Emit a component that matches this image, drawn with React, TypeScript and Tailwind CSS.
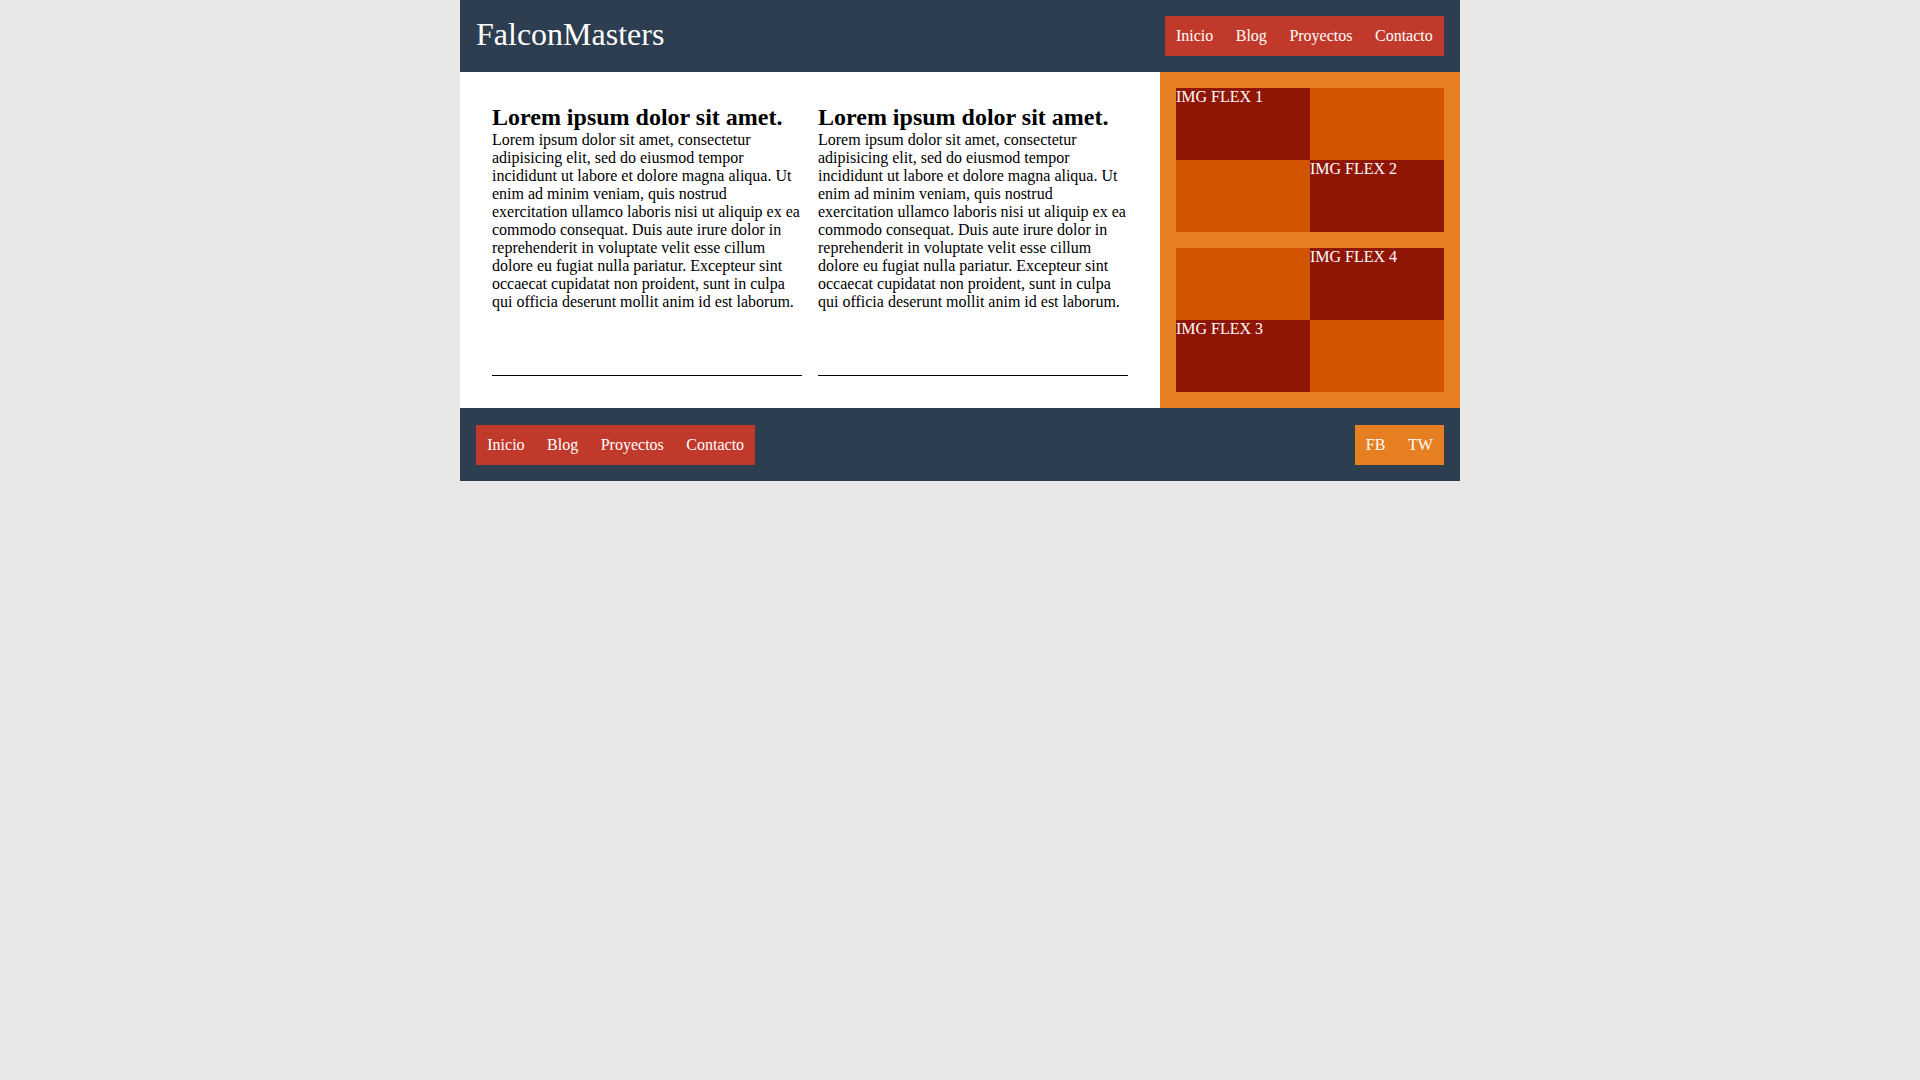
import React from "react";

const links = ["Inicio", "Blog", "Proyectos", "Contacto"];

const lorem =
  "Lorem ipsum dolor sit amet, consectetur adipisicing elit, sed do eiusmod tempor incididunt ut labore et dolore magna aliqua. Ut enim ad minim veniam, quis nostrud exercitation ullamco laboris nisi ut aliquip ex ea commodo consequat. Duis aute irure dolor in reprehenderit in voluptate velit esse cillum dolore eu fugiat nulla pariatur. Excepteur sint occaecat cupidatat non proident, sunt in culpa qui officia deserunt mollit anim id est laborum.";

function Nav({ items, color }: { items: string[]; color: string }) {
  return (
    <nav className={`flex h-10 items-center ${color}`}>
      {items.map((item) => (
        <a key={item} href="#" className="px-[11.25px] text-white">
          {item}
        </a>
      ))}
    </nav>
  );
}

function Article() {
  return (
    <article className="flex-1 border-b border-black">
      <h2 className="text-2xl font-bold leading-[1.107]">Lorem ipsum dolor sit amet.</h2>
      <p className="text-base leading-[18px]">{lorem}</p>
    </article>
  );
}

function Cell({ label, dark }: { label?: string; dark?: boolean }) {
  return (
    <div className={`h-[72px] leading-[18px] text-white ${dark ? "bg-[#8f1505]" : "bg-[#d35400]"}`}>
      {label}
    </div>
  );
}

export default function App() {
  return (
    <div className="min-h-screen bg-[#e8e8e8] font-['Liberation_Serif','Times_New_Roman',serif] text-black">
      <div className="mx-auto w-[1000px]">
        <header className="flex h-[72px] items-center justify-between bg-[#2c3e50] px-4">
          <h1 className="mb-1 text-[32px] leading-none text-white">FalconMasters</h1>
          <Nav items={links} color="bg-[#c0392b]" />
        </header>
        <div className="flex">
          <main className="flex flex-1 gap-4 bg-white p-8">
            <Article />
            <Article />
          </main>
          <aside className="flex w-[300px] flex-col gap-4 bg-[#e67e22] p-4">
            <div className="grid grid-cols-2">
              <Cell label="IMG FLEX 1" dark />
              <Cell />
              <Cell />
              <Cell label="IMG FLEX 2" dark />
            </div>
            <div className="grid grid-cols-2">
              <Cell />
              <Cell label="IMG FLEX 4" dark />
              <Cell label="IMG FLEX 3" dark />
              <Cell />
            </div>
          </aside>
        </div>
        <footer className="flex h-[73px] items-center justify-between bg-[#2c3e50] px-4">
          <Nav items={links} color="bg-[#c0392b]" />
          <Nav items={["FB", "TW"]} color="bg-[#e67e22]" />
        </footer>
      </div>
    </div>
  );
}
